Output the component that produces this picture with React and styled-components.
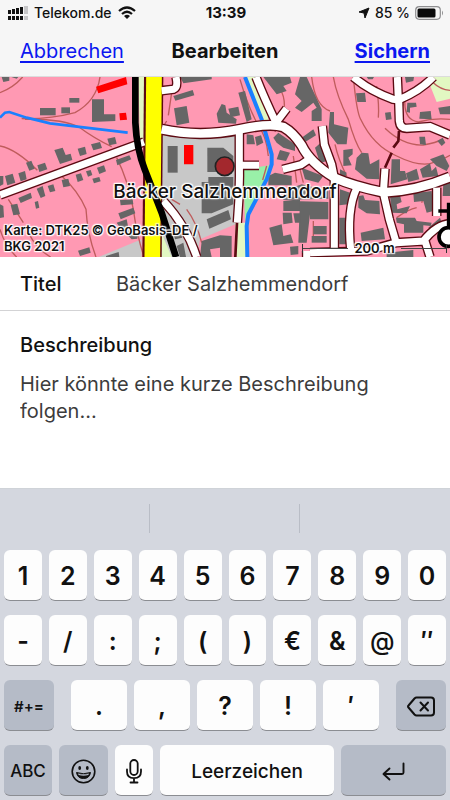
import styled, { createGlobalStyle } from "styled-components"


function App() {
    return (
        <Screen>
            <GlobalStyle />
            <StatusBar>
                <StatusLeft>
                    <SignalIcon />
                    <span>Telekom.de</span>
                    <WifiIcon />
                </StatusLeft>
                <Clock>13:39</Clock>
                <StatusRight>
                    <LocationIcon />
                    <span>85 %</span>
                    <BatteryIcon />
                </StatusRight>
            </StatusBar>
            <NavBar>
                <NavLink href="#abbrechen">Abbrechen</NavLink>
                <NavTitle>Bearbeiten</NavTitle>
                <NavLink href="#sichern" $primary>Sichern</NavLink>
            </NavBar>
            <MapFrame>
                <TownMap />
                <PlaceLabel>Bäcker Salzhemmendorf</PlaceLabel>
                <Attribution>Karte: DTK25 © GeoBasis-DE /<br />BKG 2021</Attribution>
                <ScaleBar><ScaleLine /><span>200 m</span><ScaleLine $end /></ScaleBar>
            </MapFrame>
            <Form>
                <TitleRow>
                    <Label htmlFor="titel">Titel</Label>
                    <TitleInput id="titel" defaultValue="Bäcker Salzhemmendorf" />
                </TitleRow>
                <DescriptionBlock>
                    <Label htmlFor="beschreibung">Beschreibung</Label>
                    <DescriptionInput
                        id="beschreibung"
                        rows={3}
                        defaultValue="Hier könnte eine kurze Beschreibung folgen..."
                    />
                </DescriptionBlock>
            </Form>
            <Keyboard />
        </Screen>
    )
}
export default App


function Keyboard() {
    return (
        <KeyboardPanel>
            <Suggestions><Suggestion /><Suggestion /><Suggestion /></Suggestions>
            <KeyRows>
                <KeyRow>
                    {[..."1234567890"].map((key) => <Key key={key}>{key}</Key>)}
                </KeyRow>
                <KeyRow>
                    {[..."-/:;()€&"].map((key) => <Key key={key}>{key}</Key>)}
                    <Key $light>@</Key>
                    <Key>″</Key>
                </KeyRow>
                <KeyRow $gap={17}>
                    <Key $dark $width={50} $size={15}>#+=</Key>
                    <KeyGroup>
                        {[...".,?!′"].map((key) => <Key key={key}>{key}</Key>)}
                    </KeyGroup>
                    <Key $dark $width={50} aria-label="Löschen"><DeleteIcon /></Key>
                </KeyRow>
                <KeyRow>
                    <Key $dark $width={48} $size={17} $light>ABC</Key>
                    <Key $dark $width={49} aria-label="Emoji"><SmileIcon /></Key>
                    <Key $width={38} aria-label="Diktieren"><MicIcon /></Key>
                    <Key $size={19} $light>Leerzeichen</Key>
                    <Key $dark $width={105} aria-label="Return"><ReturnIcon /></Key>
                </KeyRow>
            </KeyRows>
        </KeyboardPanel>
    )
}

function SignalIcon() {
    return (
        <svg width="20" height="16" viewBox="0 0 20 16" aria-hidden="true">
            <path fill="#111" d="M0 5h3v4H0zM4 4h3v5H4zM8 3h3v6H8zM12 2h3v7h-3zM0 11h3v4H0zM4 11h3v4H4zM8 11h3v4H8zM12 11h3v4h-3z" />
            <path fill="#c6c6c8" d="M16 1h4v8h-4zM16 11h4v4h-4z" />
        </svg>
    )
}

function WifiIcon() {
    return (
        <svg width="18" height="13" viewBox="0 0 18 13" fill="none" stroke="#111" strokeWidth="2.200" aria-hidden="true">
            <path d="M1 5Q9-2 17 5M4 8q5-4.500 10 0" />
            <path d="M9 13 6 10q3-2.500 6 0z" fill="#111" stroke="none" />
        </svg>
    )
}

function LocationIcon() {
    return (
        <svg width="12" height="12" viewBox="0 0 12 12" aria-hidden="true">
            <path d="M11 1 7 11 6 6 1 5z" fill="#111" stroke="#111" strokeLinejoin="round" />
        </svg>
    )
}

function BatteryIcon() {
    return (
        <svg width="29" height="14" viewBox="0 0 29 14" aria-hidden="true">
            <rect x=".7" y=".7" width="24.600" height="12.600" rx="3.500" fill="none" stroke="#8e8e90" strokeWidth="1.200" />
            <rect x="2.500" y="2.500" width="18" height="9" rx="1.500" fill="#0a0a0a" />
            <path d="M27 4.500q2 2.500 0 5z" fill="#8e8e90" />
        </svg>
    )
}

function DeleteIcon() {
    return (
        <svg width="28" height="21" viewBox="0 0 28 21" fill="none" stroke="#111" strokeWidth="2" strokeLinecap="round" strokeLinejoin="round" aria-hidden="true">
            <path d="M9.500 1.500H24q3 0 3 3v12q0 3-3 3H9.500q-1 0-2-1L1.500 11.500q-1-1 0-2L7.500 2.500q1-1 2-1zM13.500 6.500l7.500 8M21 6.500l-7.500 8" />
        </svg>
    )
}

function SmileIcon() {
    return (
        <svg width="25" height="25" viewBox="0 0 25 25" aria-hidden="true">
            <circle cx="12.500" cy="12.500" r="11.300" fill="none" stroke="#111" strokeWidth="1.600" />
            <ellipse cx="8.700" cy="9" rx="1.400" ry="1.900" fill="#111" />
            <ellipse cx="16.300" cy="9" rx="1.400" ry="1.900" fill="#111" />
            <path d="M5.500 13.500q7 2.500 14 0-1 6-7 6t-7-6z" fill="#111" stroke="#111" strokeLinejoin="round" />
            <path d="M7 14.500q5.500 1.700 11 0l-.6 1.500q-4.900 1.300-9.800 0z" fill="#b5bbc7" />
        </svg>
    )
}

function MicIcon() {
    return (
        <svg width="18" height="25" viewBox="0 0 18 25" fill="none" stroke="#111" strokeWidth="1.800" strokeLinecap="round" aria-hidden="true">
            <rect x="5.300" y="1" width="7.400" height="15" rx="3.700" />
            <path d="M2 10.500v2q0 6.700 7 6.700t7-6.700v-2M9 19.500V23M5.500 23.500h7" />
        </svg>
    )
}

function ReturnIcon() {
    return (
        <svg width="23" height="19" viewBox="0 0 23 19" fill="none" stroke="#111" strokeWidth="1.900" strokeLinecap="round" strokeLinejoin="round" aria-hidden="true">
            <path d="M21.500 1.500v9q0 1.500-1.500 1.500H2M7.500 6.500 1.500 12l6 5.500" />
        </svg>
    )
}


const CONTOURS = [
    "M0 50Q40 35 68 3",
    "M65 128Q150 130 225 110Q290 75 300 3",
    "M75 130Q190 128 240 155Q280 185 335 212",
    "M0 210Q50 220 112 283",
    "M185 300Q235 345 258 400Q262 475 288 543",
    "M350 245Q385 315 400 400Q410 475 432 543",
    "M25 370L70 440M85 470Q110 520 152 543M0 460Q15 510 50 543",
    "M515 50 505 118M500 135 492 148M515 370 540 385M560 400Q590 440 605 500",
    "M720 10Q740 80 770 140Q800 180 805 240M800 270 788 312M840 40Q855 60 853 98",
    "M880 240 890 320M900 280 910 320",
    "M935 3Q945 90 990 105M1005 205Q1015 250 1040 300",
    "M1000 3Q1010 60 1045 130Q1065 200 1085 230",
    "M1060 3Q1070 110 1082 130Q1120 210 1190 240Q1250 270 1290 263Q1330 250 1350 238",
    "M1130 30Q1138 90 1135 125M1155 157Q1210 210 1270 207Q1310 200 1325 190",
    "M1215 70Q1210 130 1255 138Q1300 125 1350 130M1300 20Q1320 40 1350 43",
    "M940 435V480M1190 425Q1225 400 1250 395M1270 365 1265 380",
]

// one polygon per house or block of houses
const BUILDINGS = [
    "5,3 28,3 28,14 10,18", "34,3 55,3 50,8", "208,66 238,66 238,80 208,80", "120,96 167,96 167,118 120,118",
    "184,94 210,94 210,112 184,112", "276,70 312,70 312,115 346,115 346,135 276,138",
    "78,260 94,254 104,278 88,284", "112,268 135,260 142,280 118,288",
    "163,222 188,215 197,237 212,233 217,252 180,264", "233,218 255,212 260,234 240,240",
    "273,205 300,198 306,216 280,223", "322,188 345,183 350,203 328,208", "348,252 388,238 394,250 352,268",
    "55,292 75,285 80,310 62,316", "15,300 38,293 46,320 22,328", "0,300 10,300 10,325 0,330",
    "291,275 312,268 318,286 298,294", "258,286 272,282 277,297 264,302", "277,308 298,303 302,316 282,322",
    "227,296 243,292 250,312 233,318", "185,312 205,308 210,330 190,334", "143,330 160,325 166,345 150,349",
    "110,338 128,330 136,360 122,366", "55,366 92,350 96,366 62,381", "32,387 52,383 60,415 40,418",
    "0,385 10,390 12,424 0,426", "104,378 114,375 118,395 108,398", "355,412 400,395 406,412 362,430",
    "360,372 398,370 400,385 362,388", "350,440 380,430 385,455 414,475 412,488 395,490 360,455",
    "234,524 268,514 272,530 240,540", "318,540 356,528 358,543 318,543",
    "540,3 635,3 635,10 550,22", "520,60 578,42 583,58 526,74", "522,97 560,90 568,140 530,148",
    "650,113 665,84 676,88 680,110 710,130 708,143 655,140",
    "685,98 715,92 720,118 692,124", "715,50 735,45 755,130 740,138", "503,210 533,210 533,290 503,290",
    "622,215 670,215 700,240 700,288 622,288", "605,318 625,318 625,303 700,303 700,385 635,412 605,412",
    "620,430 685,402 693,430 628,458", "605,495 660,478 695,480 695,543 660,543 660,515 630,520 635,543 600,543",
    "515,450 540,455 547,485 525,490", "530,510 550,500 558,543 540,543", "740,175 760,178 765,205 740,205",
    "765,183 783,178 790,200 770,210", "820,185 835,170 885,205 885,225 850,215 830,200",
    "840,222 870,230 858,255 830,250", "805,300 825,290 875,300 875,328 805,328",
    "790,3 870,3 875,20 850,30 860,45 830,55", "850,375 900,370 900,405 850,405", "848,410 875,410 878,440 850,445",
    "808,455 845,445 850,480 872,475 880,500 820,508", "870,512 895,510 895,535 872,537",
    "900,3 920,3 965,100 965,135 935,135 935,105 950,95 940,80 905,108 885,95 905,75 885,55",
    "1068,52 1095,50 1098,78 1072,78", "1155,110 1172,108 1175,130 1158,132",
    "1222,80 1248,80 1250,92 1230,95 1230,110 1220,108", "1260,108 1292,105 1295,130 1258,128",
    "1315,95 1350,90 1350,115 1320,115", "1258,182 1275,182 1278,207 1260,205", "1312,195 1328,185 1336,200 1325,210",
    "990,108 1002,108 1002,145 1045,155 1040,205 1012,205 985,170", "905,185 940,160 948,178 912,200",
    "945,215 962,200 980,255 960,262", "1030,222 1058,218 1058,235 1045,245 1055,268 1030,270",
    "1070,245 1085,230 1105,232 1110,265 1138,250 1138,310 1100,308 1065,280", "1020,280 1040,290 1035,310 1020,305",
    "1175,250 1200,250 1200,285 1215,285 1222,310 1172,325", "1218,292 1250,278 1258,310 1225,318",
    "1260,280 1290,262 1295,285 1308,272 1315,300 1268,305", "1290,250 1330,235 1348,270 1340,285 1310,270",
    "905,275 970,300 955,320 915,310", "850,345 905,325 985,345 985,368 850,372",
    "900,376 985,378 985,430 930,430 930,415 920,500 895,500", "880,412 902,412 902,440 885,440",
    "940,450 980,450 980,475 940,475", "935,480 980,480 980,500 935,500", "1020,340 1050,350 1045,385 1018,388",
    "1018,425 1038,425 1040,505 1018,505", "1075,360 1090,358 1095,372 1138,375 1140,415 1100,412 1075,395",
    "1082,470 1150,455 1155,490 1085,495", "1170,360 1200,358 1205,378 1190,385 1192,400 1230,390 1220,412 1175,410",
    "1188,425 1245,425 1250,435 1295,440 1292,450 1270,448 1270,470 1212,470 1212,445 1190,440",
    "1240,352 1295,345 1300,405 1280,410 1270,375 1242,378", "1215,3 1242,3 1240,15 1218,20", "1100,3 1122,3 1118,10 1105,10",
    "1330,320 1350,315 1350,360 1328,360", "1160,530 1240,522 1240,543 1160,543", "1285,455 1320,425 1325,440 1300,465",
]

const WIDE_ROADS = "M485 160Q600 185 720 160Q810 140 850 153Q880 170 905 208Q930 260 1003 305Q1060 330 1150 349Q1250 345 1350 303"

const ROADS = [
    "M0 357 432 198",
    "M528 3Q535 35 520 40L485 44",
    "M490 375Q560 450 590 543",
    "M718 165V265Q720 350 712 440M720 268H777",
    "M768 3Q790 60 828 140L860 98",
    "M848 280 903 266 930 248",
    "M1060 3Q1110 45 1180 70L1195 72 1192 3M1195 72Q1260 45 1300 3",
    "M1196 72 1198 135Q1200 157 1220 157L1290 152 1350 177",
    "M967 150 973 205 995 265 1003 305V515",
    "M1070 337Q1040 400 1052 520",
    "M1155 278 1150 350 1168 430 1190 505",
    "M1310 335V420",
    "M930 530 1100 525 1190 500 1270 495Q1310 445 1350 443M1275 495 1290 543",
    "M920 525V543",
]

function TownMap() {
    return (
        <MapDrawing viewBox="0 3 1350 540" preserveAspectRatio="xMidYMid slice" role="img" aria-label="Karte von Salzhemmendorf">
            <path fill="#ff99b3" d="M0 0h1350v543H0z" />
            <path fill="#c8c8c8" d="M486 178H706V445L600 490 590 543H480zM296 543 425 490V543z" />
            <path fill="#e2f8c2" d="M415 3h20v200h-15zM738 3h40l30 140-20 10zM706 440h36v103h-38zM1285 15l25 63 40-10V3h-50zM480 460 515 543H485z" />
            <path fill="#99f0a8" d="M730 280 808 268 795 320 750 400 735 435z" />
            <g fill="none" stroke="#bf5c5c" strokeWidth="4">
                {CONTOURS.map((d) => <path key={d} d={d} />)}
            </g>
            <g fill="#666">
                {BUILDINGS.map((points) => <polygon key={points} points={points} />)}
            </g>
            <path fill="#f00" d="M288 32 378 3 382 25 295 52zM358 112l20-2 3 21-21 2zM552 207h28v58h-28z" />
            <g fill="none" stroke="#1a80ff">
                <path strokeWidth="8" d="M0 125 15 110 28 108 80 125 150 142 383 170" />
                <path strokeWidth="12" d="M735 3 785 130 815 235V265L800 310 745 415 740 450 742 543" />
            </g>
            <g fill="none" stroke="#5c0a12">
                <path strokeWidth="34" d={WIDE_ROADS} />
                {ROADS.map((d) => <path key={d} strokeWidth="29" d={d} />)}
                <path strokeWidth="8" d="M1197 165 1195 195 1180 215M1175 230 1155 275M711 440 706 543" />
            </g>
            <path fill="none" stroke="#5c0a12" strokeWidth="58" d="M461 3 456 543" />
            <path fill="none" stroke="#ff0" strokeWidth="47" d="M462 3 457 543" />
            <g fill="none" stroke="#fff">
                <path strokeWidth="26" d={WIDE_ROADS} />
                {ROADS.map((d) => <path key={d} strokeWidth="21" d={d} />)}
            </g>
            <path fill="none" stroke="#000" strokeWidth="20" d="M406 3V140Q410 220 434 280L485 410 528 543" />
            <g stroke="#000" strokeWidth="11">
                <circle cx="1345" cy="483" r="28" fill="#fff" />
                <path d="M1346 380V455M1315 405H1350" />
            </g>
            <circle cx="674" cy="271" r="28" fill="#a3282d" stroke="#222" strokeWidth="5" />
        </MapDrawing>
    )
}


const GlobalStyle = createGlobalStyle`
    * {
        box-sizing: border-box;
    }
    body {
        margin: 0;
        background: #fff;
        color: #111;
        font-family: Inter, "Liberation Sans", sans-serif;
    }
    button, input, textarea {
        font-family: inherit;
    }
`;

const Screen = styled.div`
    display: flex;
    flex-direction: column;
    min-height: 100vh;
`;

const StatusBar = styled.header`
    display: grid;
    grid-template-columns: 1fr auto 1fr;
    align-items: center;
    height: 25px;
    padding: 0 6px 0 8px;
    background: #f6f6f6;
    font-size: 14px;
    font-weight: 500;
    line-height: 24px;
`;

const StatusLeft = styled.div`
    display: flex;
    align-items: center;
    gap: 6px;
`;

const StatusRight = styled(StatusLeft)`
    justify-content: flex-end;
    gap: 5px;
`;

const Clock = styled.time`
    font-size: 15px;
    font-weight: 700;
`;

const NavBar = styled.nav`
    display: grid;
    grid-template-columns: 1fr auto 1fr;
    align-items: center;
    height: 52px;
    padding: 0 20px;
    border-bottom: 1px solid #dcdcdc;
    background: #f6f6f6;
`;

const NavLink = styled.a`
    justify-self: ${({ $primary }) => ($primary ? "end" : "start")};
    color: #0b17f0;
    font-size: 20px;
    font-weight: ${({ $primary }) => ($primary ? 700 : 400)};
    line-height: 24px;
    text-underline-offset: 3px;
    text-decoration-skip-ink: none;
`;

const NavTitle = styled.h1`
    margin: 0;
    font-size: 20px;
    font-weight: 700;
    line-height: 24px;
`;

const MapFrame = styled.section`
    position: relative;
    height: 180px;
    overflow: hidden;
    color: #111;
    text-shadow: 0 0 1px #fff, 1px 1px 1px #fff, -1px -1px 1px #fff, 1px -1px 1px #fff, -1px 1px 1px #fff, 0 0 3px #fff;
`;

const MapDrawing = styled.svg`
    display: block;
    width: 100%;
    height: 100%;
`;

const PlaceLabel = styled.div`
    position: absolute;
    top: 103px;
    left: 50%;
    transform: translateX(-50%);
    font-size: 19px;
    font-weight: 500;
    line-height: 24px;
    white-space: nowrap;
`;

const Attribution = styled.div`
    position: absolute;
    bottom: 3px;
    left: 4px;
    font-size: 13px;
    font-weight: 600;
    line-height: 16px;
`;

const ScaleBar = styled.div`
    position: absolute;
    right: 3px;
    bottom: 1px;
    display: flex;
    align-items: center;
    gap: 6px;
    width: 145px;
    font-size: 13px;
    font-weight: 600;
    line-height: 16px;
    white-space: nowrap;
`;

const ScaleLine = styled.div`
    flex: 1;
    height: 9px;
    border: 0 solid #333;
    border-width: ${({ $end }) => ($end ? "0 1px 0 0" : "0 0 0 1px")};
    background: linear-gradient(#444, #444) center / 100% 1px no-repeat;
`;

const Form = styled.form`
    flex: 1;
    display: flex;
    flex-direction: column;
`;

const TitleRow = styled.div`
    display: grid;
    grid-template-columns: 96px 1fr;
    align-items: center;
    height: 54px;
    padding: 0 20px;
    border-bottom: 1px solid #d3d3d5;
`;

const Label = styled.label`
    font-size: 20px;
    font-weight: 500;
    line-height: 26px;
`;

const TitleInput = styled.input`
    width: 100%;
    padding: 0;
    border: 0;
    outline: 0;
    background: transparent;
    color: #3c3c3c;
    font-size: 20px;
    line-height: 26px;
`;

const DescriptionBlock = styled.div`
    flex: 1;
    display: flex;
    flex-direction: column;
    gap: 13px;
    padding: 21px 20px 0;
`;

const DescriptionInput = styled.textarea`
    width: 100%;
    padding: 0;
    border: 0;
    outline: 0;
    resize: none;
    overflow: hidden;
    background: transparent;
    color: #3c3c3c;
    font-size: 20px;
    line-height: 27px;
`;

const KeyboardPanel = styled.section`
    padding-bottom: 4px;
    border-top: 1px solid #cfd3d8;
    background: #d4d7df;
`;

const Suggestions = styled.div`
    display: grid;
    grid-template-columns: repeat(3, 1fr);
    padding: 15px 0 17px;
`;

const Suggestion = styled.div`
    height: 29px;

    &:not(:last-child) {
        border-right: 1px solid #b9bdc6;
    }
`;

const KeyRows = styled.div`
    display: flex;
    flex-direction: column;
    gap: 14px;
    padding: 0 4px;
`;

const KeyRow = styled.div`
    display: flex;
    gap: ${({ $gap }) => $gap || 7}px;
`;

const KeyGroup = styled.div`
    flex: 1;
    display: flex;
    gap: 7px;
`;

const Key = styled.button`
    flex: ${({ $width }) => ($width ? `0 0 ${$width}px` : "1 1 0")};
    display: flex;
    align-items: center;
    justify-content: center;
    min-width: 0;
    height: 51px;
    padding: 2px 0 0;
    border: 0;
    border-bottom: 1px solid #8b8d92;
    border-radius: 6px;
    background: ${({ $dark }) => ($dark ? "#b5bbc7" : "#fdfdfd")};
    color: #111;
    font-size: ${({ $size }) => $size || 25}px;
    font-weight: ${({ $light }) => ($light ? 500 : 600)};
`;
